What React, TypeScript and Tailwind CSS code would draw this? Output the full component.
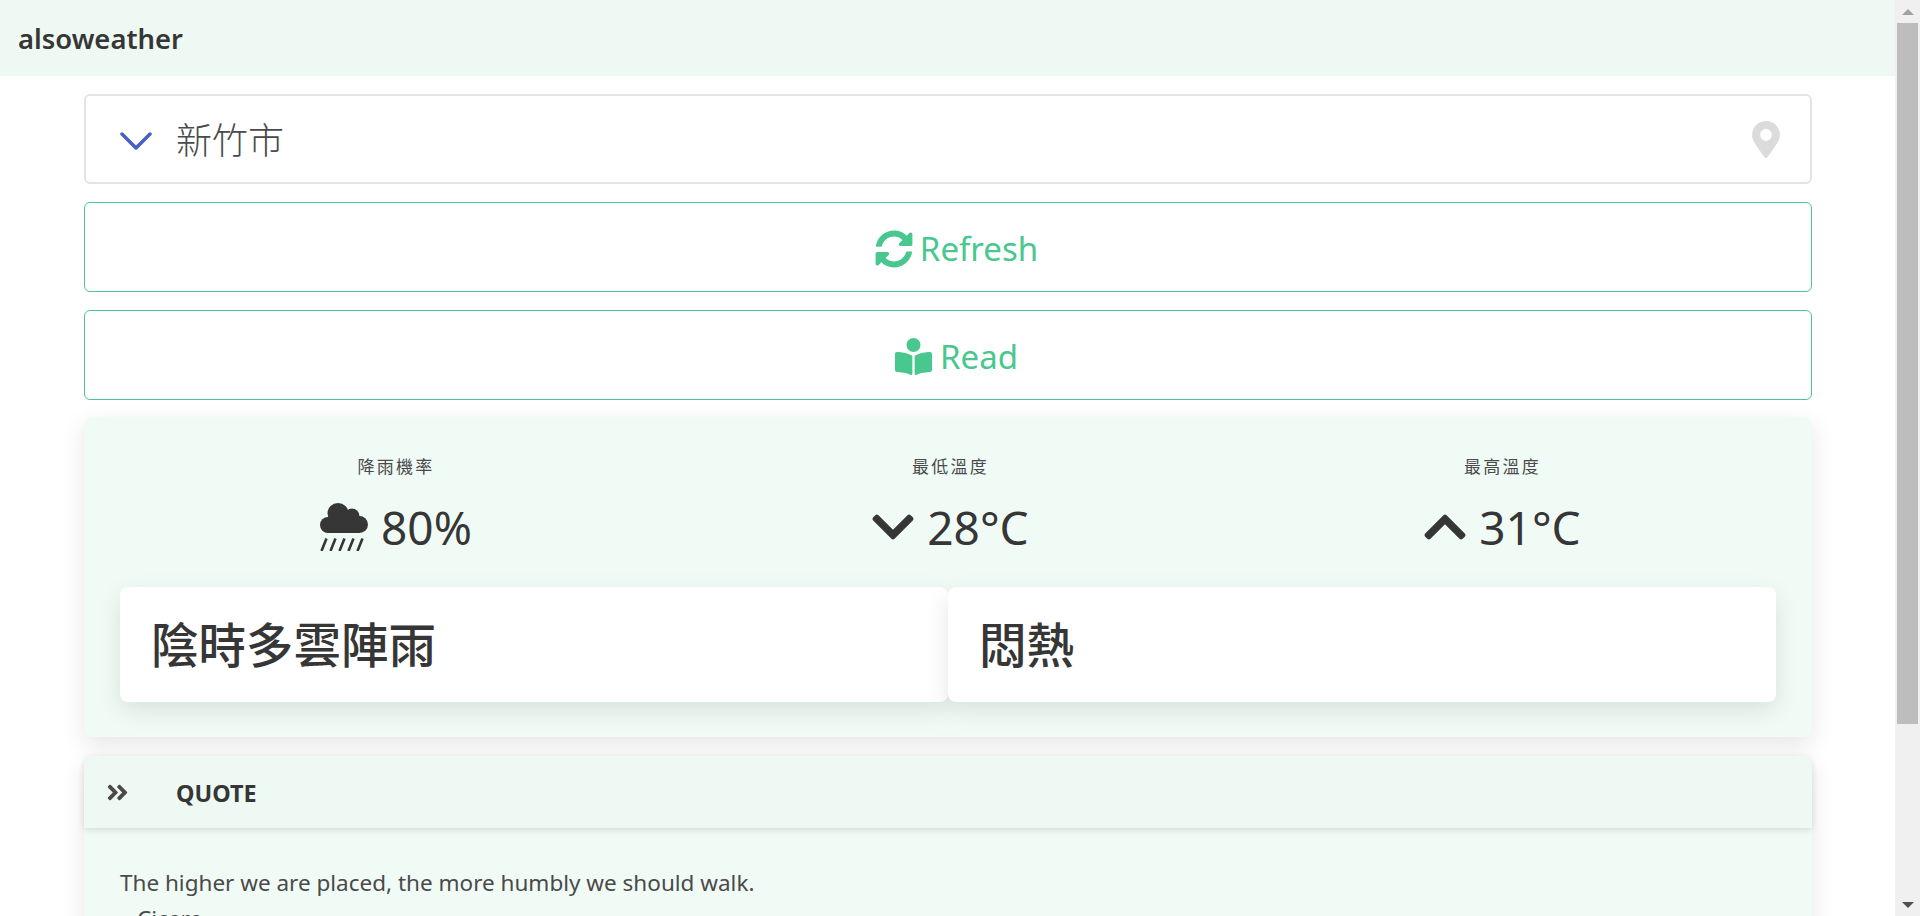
import { FaAngleDoubleRight, FaBookReader, FaChevronDown, FaChevronUp, FaMapMarkerAlt, FaSyncAlt } from "react-icons/fa";

const font = "[font-family:'Noto_Sans','Noto_Sans_CJK_TC',sans-serif]";

function RainIcon() {
  return (
    <svg viewBox="0 0 48 48" className="w-[48px] h-[48px]" fill="#363636">
      <circle cx="18" cy="10.500" r="10.500" />
      <circle cx="32" cy="13" r="7.500" />
      <circle cx="8" cy="22" r="8" />
      <circle cx="39.500" cy="21.500" r="8.500" />
      <rect x="8" y="14" width="32" height="16" />
      <path d="M1.500 48l5-12.500M10.500 48l5-12.500M19.500 48l5-12.500M28.500 48l5-12.500M37.500 48l5-12.500" stroke="#363636" strokeWidth="2.600" fill="none" />
    </svg>
  );
}

function Stat({ label, icon, value, className = "" }: { label: string; icon: React.ReactNode; value: string; className?: string }) {
  return (
    <div className={`flex flex-col items-center ${className}`}>
      <p className="text-[17px] leading-[24px] tracking-[2.200px] text-[#4a4a4a] mb-[18px]">{label}</p>
      <div className="flex items-center gap-[13px] text-[#363636] text-[46px] leading-[60px]">
        {icon}
        <span>{value}</span>
      </div>
    </div>
  );
}

export default function App() {
  return (
    <div className={`flex h-screen overflow-hidden bg-white text-[#363636] ${font}`}>
      <div className="flex-1 min-w-0">
        {/* Navbar */}
        <nav className="h-[76px] bg-[#eff9f4] flex items-center px-[18px] pt-[1px]">
          <span className="text-[27.400px] font-semibold">alsoweather</span>
        </nav>

        <main className="pl-[84px] pr-[83px] pt-[18px]">
          {/* City select */}
          <div className="h-[90px] border-2 border-[#e4e4e4] rounded-[6px] flex items-center justify-between pl-[34px] pr-[30px]">
            <div className="flex items-center gap-[24px]">
              <svg viewBox="0 0 32 20" className="w-[32px] h-[20px] relative top-[2px]" fill="none" stroke="#485fc7" strokeWidth="3.500" strokeLinecap="round" strokeLinejoin="round">
                <path d="M2 3l14 14L30 3" />
              </svg>
              <span className="text-[36px] text-[#4a4a4a] font-light relative top-[2px]">新竹市</span>
            </div>
            <FaMapMarkerAlt className="text-[#dbdbdb] w-[28px] h-[37px]" />
          </div>

          <button className="mt-[18px] w-full h-[90px] border border-[#48c78e] rounded-[6px] flex items-center justify-center gap-[7px] pl-[17px] pt-[3px] text-[#48c78e] text-[33px]">
            <FaSyncAlt className="w-[38px] h-[38px]" />
            <span>Refresh</span>
          </button>

          <button className="mt-[18px] w-full h-[90px] border border-[#48c78e] rounded-[6px] flex items-center justify-center gap-[8px] pl-[17px] pt-[3px] text-[#48c78e] text-[33px]">
            <FaBookReader className="w-[37px] h-[37px]" />
            <span>Read</span>
          </button>

          {/* Weather card */}
          <section className="mt-[17px] h-[320px] bg-[#f0fbf6] rounded-[8px] shadow-[0_8px_24px_rgba(10,10,10,0.1)] px-[36px] pt-[38px]">
            <div className="grid grid-cols-3 h-[132px]">
              <Stat label="降雨機率" icon={<RainIcon />} value="80%" />
              <Stat className="pl-[5px]" label="最低溫度" icon={<FaChevronDown className="w-[42px] h-[48px]" />} value="28°C" />
              <Stat className="pl-[5px]" label="最高溫度" icon={<FaChevronUp className="w-[42px] h-[48px]" />} value="31°C" />
            </div>
            <div className="flex h-[115px]">
              <div className="flex-1 bg-white rounded-[8px] shadow-[0_8px_24px_rgba(10,10,10,0.1)] flex items-center px-[31px] text-[47.500px] font-medium">
                陰時多雲陣雨
              </div>
              <div className="flex-1 bg-white rounded-[8px] shadow-[0_8px_24px_rgba(10,10,10,0.1)] flex items-center px-[31px] text-[47.500px] font-medium">
                悶熱
              </div>
            </div>
          </section>

          {/* Quote card */}
          <section className="mt-[19px] bg-[#f0fbf6] rounded-t-[8px] shadow-[0_8px_24px_rgba(10,10,10,0.1)]">
            <header className="h-[72px] bg-[#eff9f4] rounded-t-[8px] shadow-[0_2px_6px_rgba(10,10,10,0.12)] flex items-center pl-[21px]">
              <FaAngleDoubleRight className="w-[25px] h-[25px] text-[#4a4a4a]" />
              <span className="ml-[46px] text-[23.400px] font-bold relative top-[2px]">QUOTE</span>
            </header>
            <div className="px-[36px] pt-[37px] pb-[36px] text-[22.500px] leading-[36px] text-[#4a4a4a]">
              <p>The higher we are placed, the more humbly we should walk.</p>
              <p className="pl-[4px]">- Cicero</p>
            </div>
          </section>
        </main>
      </div>

      {/* Scrollbar */}
      <div className="w-[25px] shrink-0 bg-[#f0f0f0] flex flex-col items-center">
        <div className="h-[23px] flex items-center justify-center">
          <div className="w-0 h-0 border-x-[6px] border-x-transparent border-b-[6px] border-b-[#a3a3a3]" />
        </div>
        <div className="w-[21px] h-[701px] bg-[#bdbdbd]" />
        <div className="flex-1 flex items-end pb-[8px]">
          <div className="w-0 h-0 border-x-[6px] border-x-transparent border-t-[6px] border-t-[#505050]" />
        </div>
      </div>
    </div>
  );
}
